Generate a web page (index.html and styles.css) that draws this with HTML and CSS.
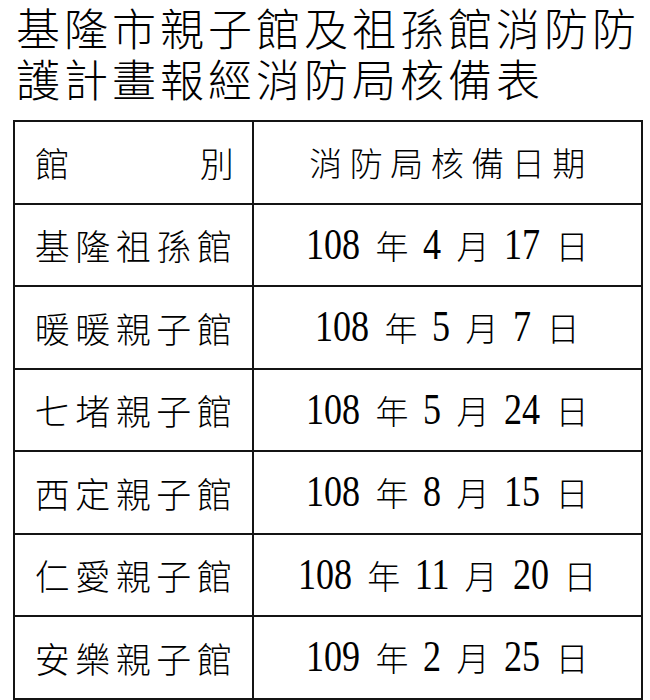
FILE: index.html
```html
<!DOCTYPE html>
<html lang="zh-Hant">
<head>
<meta charset="utf-8">
<title>基隆市親子館及祖孫館消防防護計畫報經消防局核備表</title>
<link rel="stylesheet" href="styles.css">
</head>
<body>
<div class="page">
  <h1 class="title"><span class="tline">基隆市親子館及祖孫館消防防</span><span class="tline">護計畫報經消防局核備表</span></h1>
  <table class="sheet">
    <colgroup><col class="c-name"><col class="c-date"></colgroup>
    <tr class="head">
      <td class="name"><div class="spread"><span>館</span><span>別</span></div></td>
      <td class="date-head">消防局核備日期</td>
    </tr>
    <tr>
      <td class="name">基隆祖孫館</td>
      <td><div class="date"><span class="num d3">108</span><span>年</span><span class="num d1">4</span><span>月</span><span class="num d2">17</span><span>日</span></div></td>
    </tr>
    <tr>
      <td class="name">暖暖親子館</td>
      <td><div class="date"><span class="num d3">108</span><span>年</span><span class="num d1">5</span><span>月</span><span class="num d1">7</span><span>日</span></div></td>
    </tr>
    <tr>
      <td class="name">七堵親子館</td>
      <td><div class="date"><span class="num d3">108</span><span>年</span><span class="num d1">5</span><span>月</span><span class="num d2">24</span><span>日</span></div></td>
    </tr>
    <tr>
      <td class="name">西定親子館</td>
      <td><div class="date"><span class="num d3">108</span><span>年</span><span class="num d1">8</span><span>月</span><span class="num d2">15</span><span>日</span></div></td>
    </tr>
    <tr>
      <td class="name">仁愛親子館</td>
      <td><div class="date"><span class="num d3">108</span><span>年</span><span class="num d2">11</span><span>月</span><span class="num d2">20</span><span>日</span></div></td>
    </tr>
    <tr>
      <td class="name">安樂親子館</td>
      <td><div class="date"><span class="num d3">109</span><span>年</span><span class="num d1">2</span><span>月</span><span class="num d2">25</span><span>日</span></div></td>
    </tr>
    <tr>
      <td class="name"></td>
      <td></td>
    </tr>
  </table>
</div>
</body>
</html>
```
FILE: styles.css
```css
html, body {
  margin: 0;
  padding: 0;
  background: #ffffff;
  overflow: hidden;
}

body {
  width: 650px;
  height: 700px;
  color: #000000;
  font-family: "Noto Sans CJK TC", sans-serif;
  font-weight: 300;
}

.page {
  padding: 0 0 0 12px;
}

.title {
  margin: 0 0 16px 0;
  padding: 2px 0 0 4px;
  font-size: 44px;
  font-weight: 300;
  line-height: 51px;
  letter-spacing: 4px;
}

.tline {
  display: block;
  white-space: nowrap;
}

.sheet {
  border-collapse: collapse;
  width: 630px;
  margin-left: 1px;
}

.c-name { width: 240px; }
.c-date { width: 390px; }

.sheet td {
  border: 2px solid #141414;
  height: 80.5px;
  padding: 0;
  text-align: center;
  vertical-align: middle;
}

.name {
  font-size: 35px;
  letter-spacing: 5.5px;
  text-indent: 5px;
}

.spread {
  display: flex;
  justify-content: space-between;
  padding: 0 18px 0 20px;
  text-indent: 0;
  letter-spacing: 0;
  font-size: 34px;
}

.date-head {
  font-size: 33px;
  letter-spacing: 7.5px;
  text-indent: 7px;
}

.date {
  display: flex;
  justify-content: center;
  align-items: center;
  gap: 15px;
  font-size: 33px;
}

.num {
  display: inline-block;
  font-family: "Liberation Serif", "Times New Roman", serif;
  font-weight: 400;
  font-size: 44px;
  line-height: 1;
  transform: scaleX(0.82);
}

.d1 { margin: 0 -2px; }
.d2 { margin: 0 -4px; }
.d3 { margin: 0 -6px; }
```
